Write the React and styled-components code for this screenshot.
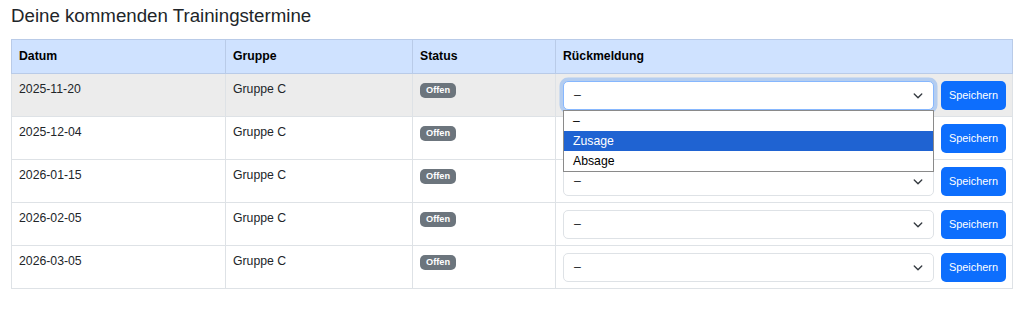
import React from 'react'
import styled, { createGlobalStyle } from 'styled-components'

const GlobalStyle = createGlobalStyle`
  body {
    margin: 0;
    background: #fff;
    font-family: "Liberation Sans", Arial, sans-serif;
    color: #212529;
  }
`

const Page = styled.div`
  padding: 5px 11px 0;
`

const Title = styled.h5`
  margin: 0 0 12px;
  font-size: 18.7px;
  font-weight: 400;
  line-height: 1.2;
  color: #212529;
`

const Table = styled.table`
  width: 100%;
  table-layout: fixed;
  border-collapse: collapse;
  font-size: 12.25px;
  line-height: 1.5;

  thead th {
    background: #cfe2ff;
    color: #000;
    font-weight: 700;
    text-align: left;
    padding: 7px;
    border: 1px solid #b9cbe8;
  }

  tbody td {
    padding: 6px 7px;
    vertical-align: top;
    border: 1px solid #dee2e6;
  }
`

const Row = styled.tr`
  background: ${p => (p.$hover ? '#ececec' : '#fff')};
`

const Badge = styled.span`
  display: inline-block;
  padding: 3px 6px;
  font-size: 9.2px;
  font-weight: 700;
  line-height: 1;
  color: #fff;
  background: #6c757d;
  border-radius: 5px;
`

const Actions = styled.div`
  display: flex;
  gap: 7px;
  margin-top: 1px;
  margin-right: -1px;
`

const SelectWrap = styled.div`
  position: relative;
  flex: 1;
`

const Select = styled.div`
  height: 29px;
  box-sizing: border-box;
  display: flex;
  align-items: center;
  padding: 0 10px;
  background: #fff;
  border: 1px solid ${p => (p.$focus ? '#86b7fe' : '#dee2e6')};
  border-radius: 5px;
  box-shadow: ${p => (p.$focus ? '0 0 0 3.5px rgba(13, 110, 253, 0.25)' : 'none')};
  color: #212529;

  svg {
    margin-left: auto;
    margin-right: -1px;
  }
`

const Popup = styled.ul`
  position: absolute;
  top: 100%;
  left: 0;
  right: 0;
  margin: 0;
  padding: 0;
  list-style: none;
  background: #fff;
  border: 1px solid #8a8a8a;
  z-index: 5;
`

const Option = styled.li`
  height: 20px;
  line-height: 20px;
  padding: 0 9px;
  font-size: 12.25px;
  color: ${p => (p.$active ? '#fff' : '#000')};
  background: ${p => (p.$active ? '#1f63d2' : 'transparent')};
`

const SaveButton = styled.button`
  height: 29px;
  padding: 0 8px;
  border: 0;
  border-radius: 5px;
  background: #0d6efd;
  color: #fff;
  font-family: inherit;
  font-size: 10.9px;
`

const Chevron = () => (
  <svg width="12" height="9" viewBox="0 0 16 12">
    <path d="M3 4l5 5 5-5" fill="none" stroke="#343a40" strokeWidth="1.8" strokeLinecap="round" strokeLinejoin="round" />
  </svg>
)

const termine = ['2025-11-20', '2025-12-04', '2026-01-15', '2026-02-05', '2026-03-05']

export default function App() {
  return (
    <Page>
      <GlobalStyle />
      <Title>Deine kommenden Trainingstermine</Title>
      <Table>
        <colgroup>
          <col style={{ width: 214 }} />
          <col style={{ width: 187 }} />
          <col style={{ width: 143 }} />
          <col />
        </colgroup>
        <thead>
          <tr>
            <th>Datum</th>
            <th>Gruppe</th>
            <th>Status</th>
            <th>Rückmeldung</th>
          </tr>
        </thead>
        <tbody>
          {termine.map((datum, i) => (
            <Row key={datum} $hover={i === 0}>
              <td>{datum}</td>
              <td>Gruppe C</td>
              <td><Badge>Offen</Badge></td>
              <td>
                <Actions>
                  <SelectWrap>
                    <Select $focus={i === 0}>
                      –
                      <Chevron />
                    </Select>
                    {i === 0 && (
                      <Popup>
                        <Option>–</Option>
                        <Option $active>Zusage</Option>
                        <Option>Absage</Option>
                      </Popup>
                    )}
                  </SelectWrap>
                  <SaveButton>Speichern</SaveButton>
                </Actions>
              </td>
            </Row>
          ))}
        </tbody>
      </Table>
    </Page>
  )
}
